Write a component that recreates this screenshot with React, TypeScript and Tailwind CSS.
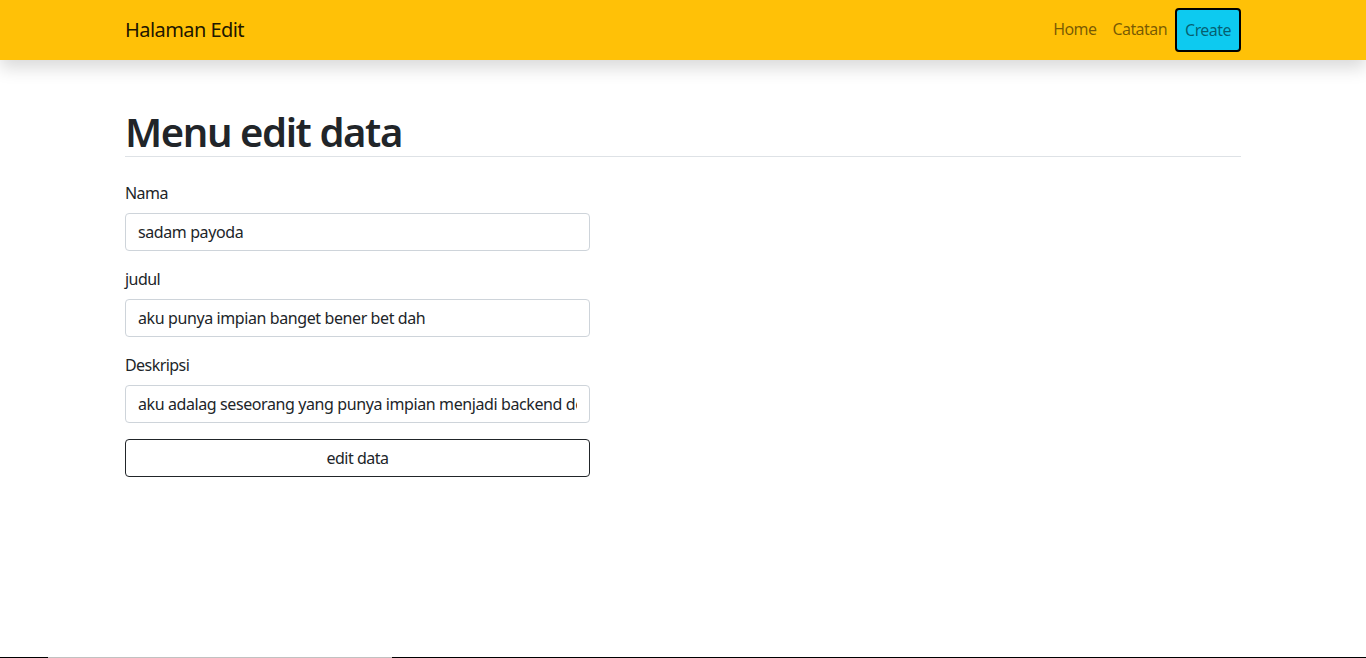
import { useState } from 'react';

const font = { fontFamily: '"Noto Sans", "Open Sans", Arial, sans-serif' };

const App = () => {
  const [form, setForm] = useState({
    nama: 'sadam payoda',
    judul: 'aku punya impian banget bener bet dah',
    deskripsi: 'aku adalag seseorang yang punya impian menjadi backend developer handal',
  });

  const fields: { key: keyof typeof form; label: string }[] = [
    { key: 'nama', label: 'Nama' },
    { key: 'judul', label: 'judul' },
    { key: 'deskripsi', label: 'Deskripsi' },
  ];

  return (
    <div className="h-[658px] flex flex-col bg-white text-[#212529] overflow-hidden tracking-[-0.035em]" style={font}>
      {/* ===== NAVBAR ===== */}
      <nav className="h-[60px] shrink-0 bg-[#ffc107] shadow-[0_8px_16px_rgba(0,0,0,0.15)] relative z-10">
        <div className="w-[1116px] mx-auto h-full flex items-center justify-between">
          <span className="text-[20px] text-black/90 leading-[30px]">Halaman Edit</span>
          <div className="flex items-center">
            <a className="px-2 text-[16px] text-black/55 leading-6 -mt-[3px]">Home</a>
            <a className="px-2 text-[16px] text-black/55 leading-6 -mt-[3px]">Catatan</a>
            <a className="w-[66px] h-[44px] flex items-center justify-center bg-[#0dcaf0] border-2 border-black rounded-[4px] text-[16px] text-black/55">
              Create
            </a>
          </div>
        </div>
      </nav>

      {/* ===== FORM ===== */}
      <main className="flex-1 w-[1116px] mx-auto pt-[48px]">
        <h1 className="text-[40px] font-semibold leading-[48px] border-b border-[#dee2e6] tracking-[-0.035em]">
          Menu edit data
        </h1>
        <form className="w-[465px] mt-[24px]" onSubmit={(e) => e.preventDefault()}>
          {fields.map((f) => (
            <div key={f.key} className="mb-4">
              <label className="block text-[16px] leading-6 mb-2">{f.label}</label>
              <input
                value={form[f.key]}
                onChange={(e) => setForm({ ...form, [f.key]: e.target.value })}
                className="w-full h-[38px] px-3 border border-[#ced4da] rounded-[4px] text-[16px] text-[#212529] outline-none tracking-[-0.025em]"
              />
            </div>
          ))}
          <button className="w-full h-[38px] border border-[#212529] rounded-[4px] text-[16px] text-[#212529] bg-white tracking-[-0.03em]">
            edit data
          </button>
        </form>
      </main>

      {/* ===== SCROLLBAR LINE ===== */}
      <div className="h-px shrink-0 flex">
        <div className="w-[48px] bg-black" />
        <div className="w-[344px] bg-[#c1c1c1]" />
        <div className="flex-1 bg-black" />
      </div>
    </div>
  );
};

export default App;
